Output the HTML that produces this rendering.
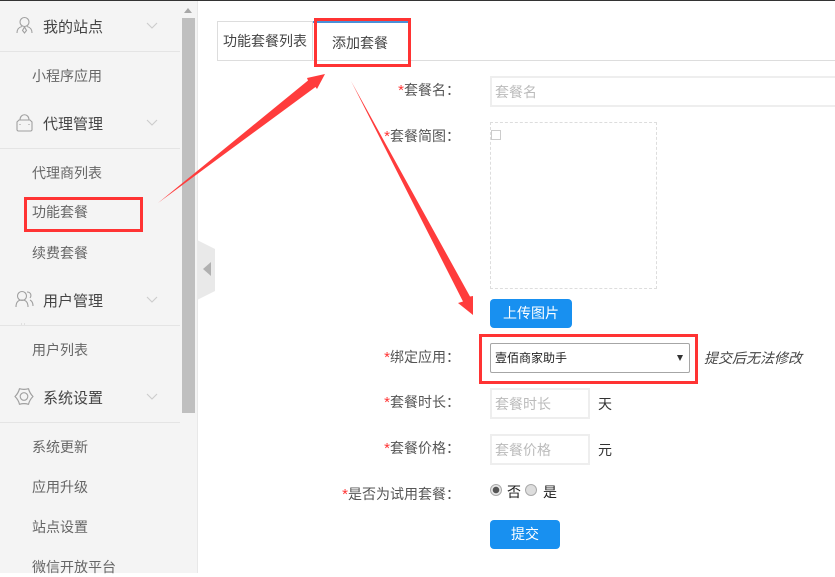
<!DOCTYPE html>
<html lang="zh"><head><meta charset="utf-8">
<style>
html,body{margin:0;padding:0;background:#fff}
body{width:835px;height:573px;overflow:hidden;position:relative;font-family:"Liberation Sans","Microsoft YaHei","Noto Sans CJK SC",sans-serif;font-size:14px;color:#333}
.a{position:absolute;white-space:nowrap}
.h{left:43px;font-size:15px;color:#444;line-height:20px}
.s{left:32px;font-size:14px;color:#666;line-height:20px}
.l{left:0;width:180px;height:1px;background:#e4e4e4}
.lb{right:calc(835px - 460px);color:#555;line-height:20px;font-size:14px}
.lb i{color:#f33;font-style:normal;font-size:15px}
.in{box-sizing:border-box;border:2px solid #eee;background:#fff;color:#bbb;line-height:28px;padding-left:3px}
.btn{background:#1890f0;color:#fff;border-radius:4px;text-align:center;height:29px;line-height:29px}
.r{box-sizing:border-box;border:3px solid #ff3333;background:transparent}
</style></head><body>
<div class="a" style="left:0;top:0;width:197px;height:573px;background:#f4f4f4"></div>
<div class="a" style="left:197px;top:0;width:1px;height:573px;background:#e8e8e8"></div>
<div class="a" style="left:0;top:0;width:835px;height:1px;background:#333"></div>
<div class="a" style="left:182px;top:18px;width:13px;height:395px;background:#bfbfbf"></div>
<div class="a" style="left:184px;top:8px;width:0;height:0;border-left:4px solid transparent;border-right:4px solid transparent;border-bottom:5px solid #a8a8a8"></div>

<div class="a l" style="top:51px"></div><div class="a l" style="top:148px"></div><div class="a l" style="top:325px"></div><div class="a l" style="top:422px"></div>

<div class="a h" style="top:18px">我的站点</div>
<div class="a s" style="top:66px">小程序应用</div>
<div class="a h" style="top:115px">代理管理</div>
<div class="a s" style="top:163px">代理商列表</div>
<div class="a s" style="top:202px">功能套餐</div>
<div class="a s" style="top:243px">续费套餐</div>
<div class="a h" style="top:292px">用户管理</div>
<div class="a s" style="top:340px">用户列表</div>
<div class="a h" style="top:389px">系统设置</div>
<div class="a s" style="top:437px">系统更新</div>
<div class="a s" style="top:477px">应用升级</div>
<div class="a s" style="top:517px">站点设置</div>
<div class="a s" style="top:557px">微信开放平台</div>

<svg class="a" style="left:0;top:0" width="215" height="573" fill="none" stroke="#a0a0a0" stroke-width="1.1">
<g stroke="#ccc"><path d="M147 23l5 5 5-5M147 120l5 5 5-5M147 297l5 5 5-5M147 394l5 5 5-5"/></g>
<circle cx="24.500" cy="22" r="4.500"/><path d="M17 33c0-5 3-6 5-6.500M32 33c0-5-3-6-5-6.500M24.500 27l-2 3.500 2 2.500 2-2.500z"/>
<path d="M19 120h11l2 2v8l-1 1H18l-1-1v-8zM20 120c0-7 9-7 9 0M20 124v1M29 124v1"/>
<circle cx="22" cy="296" r="4.500"/><path d="M16 307c0-5 2.500-7 6-7s6 2 6 7M27 292c3.500 0 5 3 3 6M30 300c2 1 3 3 3 6"/>
<path d="M19.500 388.700Q24 390 28.500 388.700Q29.600 393.200 33 396.500Q29.600 399.800 28.500 404.300Q24 403 19.500 404.300Q18.400 399.800 15 396.500Q18.400 393.200 19.500 388.700z" stroke-linejoin="round" stroke-width="1.200"/><circle cx="24" cy="396.500" r="3.800"/>
<path d="M197 240l18 9v42l-18 9z" fill="#e9e9e9" stroke="none"/><path d="M211 262l-8 7 8 7z" fill="#b0b0b0" stroke="none"/>
<path d="M21 324h1M24 324h1" stroke="#ccc"/>
</svg>

<div class="a" style="left:217px;top:21px;width:96px;height:40px;box-sizing:border-box;border:1px solid #ddd"></div>
<div class="a" style="left:313px;top:60px;width:522px;height:1px;background:#ddd"></div>
<div class="a" style="left:313px;top:21px;width:97px;height:2px;background:#4a90d9"></div>
<div class="a" style="left:223px;top:31px;font-size:14px;line-height:20px;color:#444">功能套餐列表</div>
<div class="a" style="left:332px;top:33px;font-size:14px;line-height:20px;color:#444">添加套餐</div>

<div class="a lb" style="top:80px"><i>*</i>套餐名：</div>
<div class="a lb" style="top:126px"><i>*</i>套餐简图：</div>
<div class="a lb" style="top:347px"><i>*</i>绑定应用：</div>
<div class="a lb" style="top:392px"><i>*</i>套餐时长：</div>
<div class="a lb" style="top:438px"><i>*</i>套餐价格：</div>
<div class="a lb" style="top:484px"><i>*</i>是否为试用套餐：</div>

<div class="a in" style="left:490px;top:76px;width:360px;height:31px">套餐名</div>
<div class="a" style="left:490px;top:122px;width:167px;height:167px;box-sizing:border-box;border:1px dashed #ddd"></div>
<div class="a" style="left:491px;top:130px;width:10px;height:10px;box-sizing:border-box;border:1px solid #ccc"></div>
<div class="a btn" style="left:490px;top:299px;width:82px">上传图片</div>

<div class="a" style="left:490px;top:343px;width:200px;height:30px;box-sizing:border-box;border:1px solid #a6a6a6;border-radius:2px;background:#fff"></div>
<div class="a" style="left:495px;top:349px;font-size:12px;line-height:18px;color:#222">壹佰商家助手</div>
<div class="a" style="left:677px;top:355px;width:0;height:0;border-left:3.500px solid transparent;border-right:3.500px solid transparent;border-top:6px solid #333"></div>
<div class="a" style="left:704px;top:348px;font-size:14px;line-height:20px;color:#444;font-style:italic">提交后无法修改</div>

<div class="a in" style="left:490px;top:388px;width:100px;height:31px">套餐时长</div>
<div class="a" style="left:598px;top:394px;line-height:20px">天</div>
<div class="a in" style="left:490px;top:434px;width:100px;height:31px">套餐价格</div>
<div class="a" style="left:598px;top:440px;line-height:20px">元</div>

<div class="a" style="left:490px;top:484px;width:12px;height:12px;box-sizing:border-box;border:1px solid #aaa;border-radius:50%;background:radial-gradient(circle,#555 0 3px,#e6e6e6 3.500px)"></div>
<div class="a" style="left:507px;top:482px;line-height:20px;color:#222">否</div>
<div class="a" style="left:525px;top:484px;width:12px;height:12px;box-sizing:border-box;border:1px solid #aaa;border-radius:50%;background:#ddd"></div>
<div class="a" style="left:543px;top:482px;line-height:20px;color:#222">是</div>

<div class="a btn" style="left:490px;top:520px;width:70px">提交</div>

<div class="a r" style="left:24px;top:197px;width:119px;height:35px"></div>
<div class="a r" style="left:314px;top:18px;width:97px;height:49px"></div>
<div class="a r" style="left:479px;top:334px;width:219px;height:50px"></div>

<svg class="a" style="left:0;top:0" width="835" height="573" fill="#ff3c3c">
<path d="M158 203L308 80.500 307 78 325 74 317 89 315.500 87z"/>
<path d="M351 81L463 301.500 458 303 473 315 473 296 470 296.500z"/>
</svg>
</body></html>
